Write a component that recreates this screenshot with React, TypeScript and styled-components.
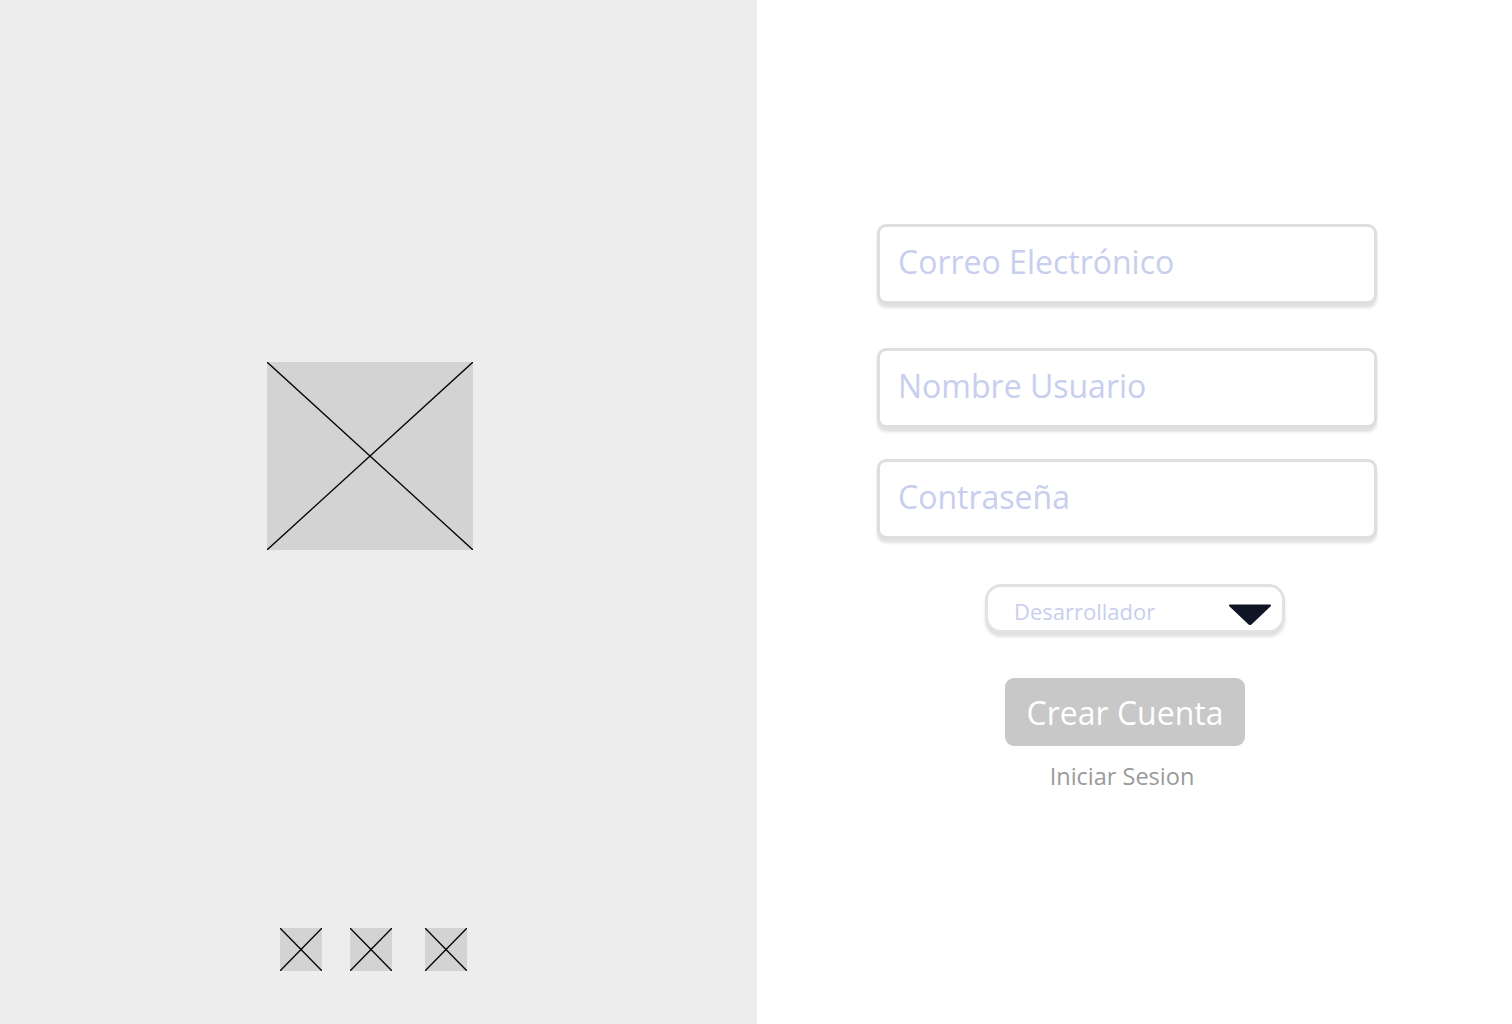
import React from 'react';
import styled, { createGlobalStyle } from 'styled-components';

const GlobalStyle = createGlobalStyle`
  html, body {
    margin: 0;
    padding: 0;
    background: #ffffff;
  }
  body {
    font-family: 'Open Sans', 'Liberation Sans', sans-serif;
  }
`;

const Page = styled.div`
  width: 1512px;
  height: 1024px;
  display: flex;
  overflow: hidden;
`;

const Showcase = styled.div`
  width: 757px;
  height: 100%;
  background: #ededed;
  display: flex;
  flex-direction: column;
  padding: 362px 0 53px 267px;
  box-sizing: border-box;
`;

const Thumbs = styled.div`
  margin-top: auto;
  margin-left: 13px;
  display: flex;
`;

const Placeholder = styled.svg<{ $offset?: number }>`
  display: block;
  margin-left: ${p => p.$offset ?? 0}px;
`;

const FormSide = styled.div`
  flex: 1;
  display: flex;
  flex-direction: column;
  padding: 224px 0 0 120px;
  box-sizing: border-box;
`;

const Form = styled.div`
  width: 500px;
  display: flex;
  flex-direction: column;
  align-items: center;
`;

const Field = styled.input<{ $gap?: number }>`
  width: 100%;
  height: 80px;
  box-sizing: border-box;
  margin-top: ${p => p.$gap ?? 0}px;
  padding: 0 18px 6px;
  border: 3px solid #dedede;
  border-radius: 9px;
  background: #ffffff;
  box-shadow: 0 4px 3px rgba(0, 0, 0, 0.12);
  font-family: inherit;
  font-size: 32px;
  color: #444;
  outline: none;

  &::placeholder {
    color: #c8ceed;
  }
`;

const Select = styled.div`
  width: 300px;
  height: 49px;
  box-sizing: border-box;
  margin: 45px 0 0 16px;
  padding: 0 10px 0 26px;
  border: 3px solid #e2e2e2;
  border-radius: 16px;
  background: #ffffff;
  box-shadow: 0 4px 3px rgba(0, 0, 0, 0.12);
  display: flex;
  align-items: center;
  justify-content: space-between;
`;

const SelectText = styled.span`
  font-size: 22px;
  color: #c8ceed;
  margin-top: 4px;
`;

const Caret = styled.svg`
  display: block;
  margin-top: 12px;
`;

const CreateButton = styled.button`
  margin-top: 45px;
  margin-right: 4px;
  width: 240px;
  height: 68px;
  border: none;
  border-radius: 9px;
  background: #c8c8c8;
  color: #ffffff;
  font-family: inherit;
  font-size: 32px;
  cursor: pointer;
`;

const LoginLink = styled.a`
  margin-top: 14px;
  margin-right: 10px;
  font-size: 23.5px;
  color: #9a9a9a;
  text-decoration: none;
  cursor: pointer;
`;

const ImageBox = ({ w, h, offset }: { w: number; h: number; offset?: number }) => (
  <Placeholder $offset={offset} width={w} height={h} viewBox={`0 0 ${w} ${h}`}>
    <rect width={w} height={h} fill="#d3d3d3" />
    <line x1="0" y1="0" x2={w} y2={h} stroke="#000" strokeWidth="1.3" />
    <line x1={w} y1="0" x2="0" y2={h} stroke="#000" strokeWidth="1.3" />
  </Placeholder>
);

export default function App() {
  return (
    <>
      <GlobalStyle />
      <Page>
        <Showcase>
          <ImageBox w={206} h={188} />
          <Thumbs>
            <ImageBox w={42} h={43} />
            <ImageBox w={42} h={43} offset={28} />
            <ImageBox w={42} h={43} offset={33} />
          </Thumbs>
        </Showcase>
        <FormSide>
          <Form>
            <Field placeholder="Correo Electrónico" />
            <Field $gap={44} placeholder="Nombre Usuario" />
            <Field $gap={31} placeholder="Contraseña" />
            <Select>
              <SelectText>Desarrollador</SelectText>
              <Caret width="44" height="21" viewBox="0 0 44 21">
                <path d="M2 1.5 H42 L23 19.5 Q22 20.5 21 19.5 Z" fill="#0f1524" stroke="#0f1524" strokeWidth="2" strokeLinejoin="round" />
              </Caret>
            </Select>
            <CreateButton>Crear Cuenta</CreateButton>
            <LoginLink>Iniciar Sesion</LoginLink>
          </Form>
        </FormSide>
      </Page>
    </>
  );
}
